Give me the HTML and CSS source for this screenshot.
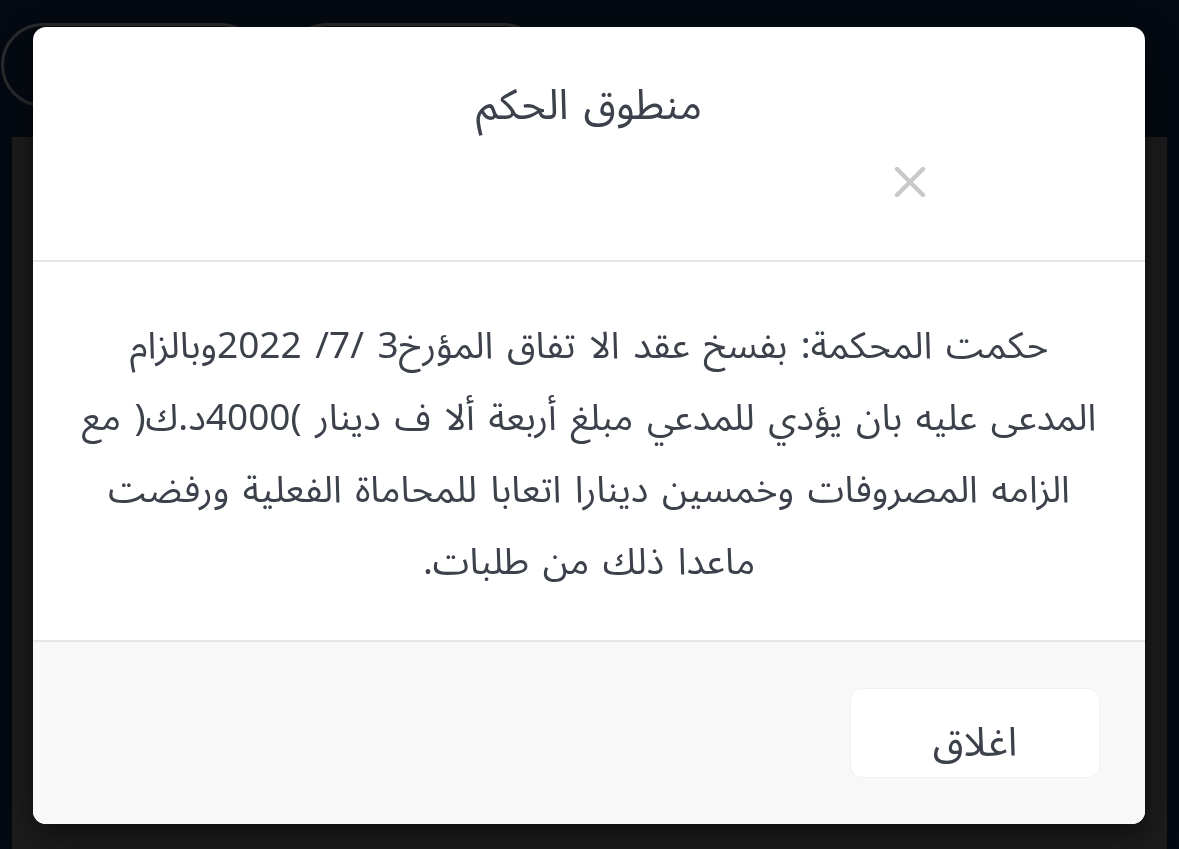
FILE: index.html
```html
<!DOCTYPE html>
<html lang="ar" dir="rtl">
<head>
<meta charset="utf-8">
<title>منطوق الحكم</title>
<link rel="stylesheet" href="styles.css">
</head>
<body>
<div class="page">
  <div class="topbar">
    <div class="pill pill-a"></div>
    <div class="pill pill-b"></div>
  </div>
  <div class="panel"></div>
</div>

<div class="modal" role="dialog">
  <div class="modal-header">
    <h5 class="modal-title">منطوق الحكم</h5>
    <button class="close" type="button" aria-label="Close">
      <svg width="32" height="30" viewBox="0 0 32 30"><path d="M3 2 L29 28 M29 2 L3 28" stroke="#c9c9c9" stroke-width="4.5" stroke-linecap="round" fill="none"/></svg>
    </button>
  </div>
  <div class="modal-body">
    <p>حكمت المحكمة: بفسخ عقد الا تفاق المؤرخ3 /7/ 2022وبالزام<br>المدعى عليه بان يؤدي للمدعي مبلغ أربعة ألا ف دينار )4000د.ك( مع<br>الزامه المصروفات وخمسين دينارا اتعابا للمحاماة الفعلية ورفضت<br>ماعدا ذلك من طلبات.</p>
  </div>
  <div class="modal-footer">
    <button class="btn-close" type="button">اغلاق</button>
  </div>
</div>
</body>
</html>
```
FILE: styles.css
```css
* { box-sizing: border-box; }
html, body { margin: 0; padding: 0; }
body {
  background: #050a12;
  font-family: "Noto Sans Arabic", "DejaVu Sans", "Noto Sans", sans-serif;
  width: 1179px;
  height: 849px;
  overflow: hidden;
}
.page {
  height: 849px;
  display: flex;
  flex-direction: column;
}
.topbar {
  height: 137px;
  display: flex;
  direction: ltr;
  align-items: flex-start;
  padding: 23px 0 0 1px;
  gap: 22px;
}
.pill {
  height: 84px;
  border: 3px solid #2a2a2c;
  border-radius: 42px;
}
.pill-a { width: 262px; }
.pill-b { width: 260px; }
.panel {
  flex: 1;
  margin: 0 12px;
  background: #1c1c1c;
}
.modal {
  position: fixed;
  left: 33px;
  top: 27px;
  width: 1112px;
  height: 797px;
  background: #fff;
  border-radius: 13px;
  overflow: hidden;
  display: flex;
  flex-direction: column;
  box-shadow: 0 10px 30px rgba(0,0,0,0.5);
  color: #3c414b;
}
.modal-header {
  height: 235px;
  border-bottom: 2px solid #e6e6e6;
  display: flex;
  flex-direction: column;
  align-items: center;
  padding-top: 49px;
}
.modal-title {
  margin: 0;
  font-size: 42px;
  font-weight: normal;
  line-height: 60px;
  word-spacing: 4px;
}
.close {
  align-self: flex-start;
  margin-right: 219px;
  margin-top: 31px;
  background: none;
  border: 0;
  padding: 0;
  width: 32px;
  height: 30px;
}
.close svg { display: block; }
.modal-body {
  height: 380px;
  padding: 48px 20px 0;
  border-bottom: 2px solid #e6e6e6;
}
.modal-body p {
  margin: 0;
  text-align: center;
  font-size: 37px;
  line-height: 72px;
  word-spacing: 4px;
  white-space: nowrap;
}
.modal-footer {
  flex: 1;
  background: #f8f8f8;
  display: flex;
  align-items: flex-start;
  padding: 46px 45px 0;
}
.btn-close {
  width: 250px;
  height: 90px;
  background: #fff;
  border: 1px solid #f1f1f1;
  border-radius: 12px;
  font-family: inherit;
  font-size: 40px;
  color: #3c414b;
  padding: 12px 0 0;
}
```
